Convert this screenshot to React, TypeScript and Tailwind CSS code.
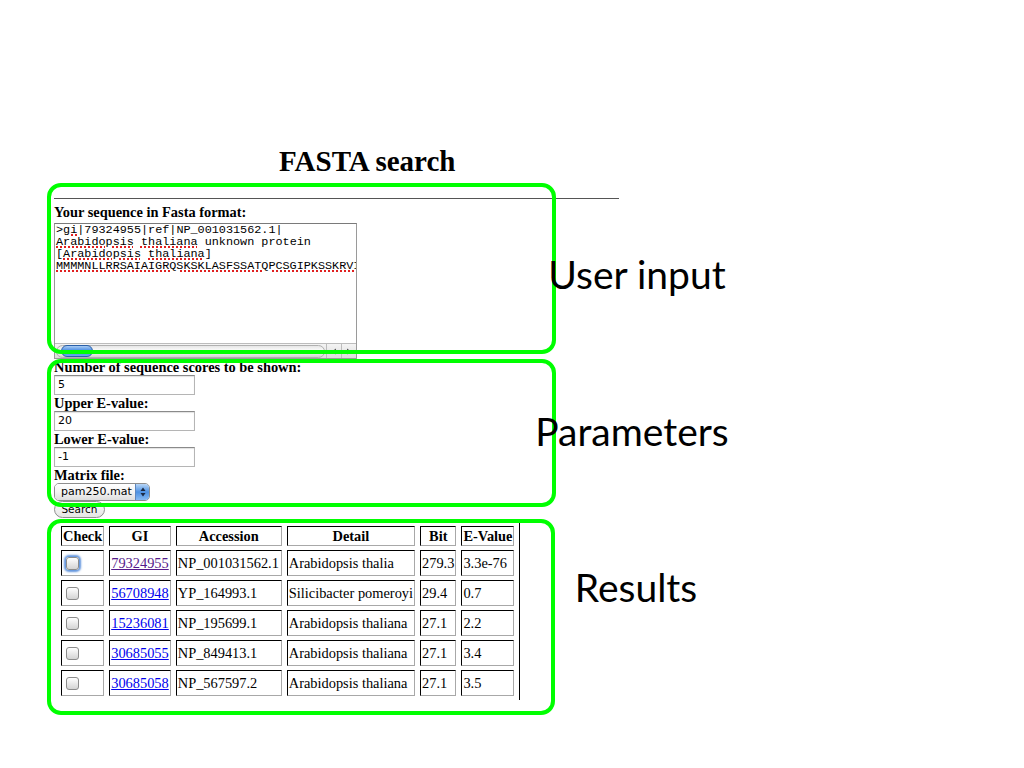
import React from "react";

const serif = "font-['Liberation_Serif','Times_New_Roman',serif]";

const rows = [
  { gi: "79324955", acc: "NP_001031562.1", detail: "Arabidopsis thalia", bit: "279.3", e: "3.3e-76", visited: true, focus: true },
  { gi: "56708948", acc: "YP_164993.1", detail: "Silicibacter pomeroyi", bit: "29.4", e: "0.7" },
  { gi: "15236081", acc: "NP_195699.1", detail: "Arabidopsis thaliana", bit: "27.1", e: "2.2" },
  { gi: "30685055", acc: "NP_849413.1", detail: "Arabidopsis thaliana", bit: "27.1", e: "3.4" },
  { gi: "30685058", acc: "NP_567597.2", detail: "Arabidopsis thaliana", bit: "27.1", e: "3.5" },
];

const cell =
  "border border-t-black border-l-black border-r-[#a8a8a8] border-b-[#a8a8a8] p-[1px] overflow-hidden whitespace-nowrap leading-[16px]";

function Spell({ children }: { children: React.ReactNode }) {
  return (
    <span className="underline decoration-dotted decoration-[#e02020] decoration-[1.5px] underline-offset-[1px]">
      {children}
    </span>
  );
}

function TextInput({ value }: { value: string }) {
  return (
    <div className="w-[141px] h-[20px] border border-[#b5b5b5] border-t-[#8a8a8a] bg-white shadow-[inset_0_1px_1px_rgba(0,0,0,0.12)] flex items-center pl-[3px] text-[11px] font-['DejaVu_Sans',sans-serif] text-black">
      {value}
    </div>
  );
}

function Label({ children }: { children: React.ReactNode }) {
  return <div className="text-[14.4px] leading-[16px] font-bold whitespace-nowrap">{children}</div>;
}

function Checkbox({ focus }: { focus?: boolean }) {
  return (
    <div
      className={
        "ml-[3px] w-[13px] h-[13px] rounded-[3px] border border-[#8c8c8c] bg-gradient-to-b from-white to-[#d4d4d4] " +
        (focus ? "shadow-[0_0_2px_2px_rgba(70,130,215,0.85)]" : "")
      }
    />
  );
}

export default function App() {
  return (
    <div className="relative w-[1024px] h-[768px] bg-white overflow-hidden text-black">
      <div className={`${serif} pt-[145px] pl-[54px] w-[640px]`}>
        <h1 className="ml-[225px] text-[29px] leading-[32px] font-bold whitespace-nowrap">FASTA search</h1>
        <div className="mt-[21px] w-[565px] h-[1px] bg-[#555]" />
        <div className="mt-[5px]">
          <Label>Your sequence in Fasta format:</Label>
        </div>
        <div className="mt-[3px] w-[303px] h-[136px] border border-[#9a9a9a] border-t-[#7a7a7a] bg-white flex flex-col overflow-hidden">
          <div className="flex-1 pl-[1px] pt-[0px] font-['Liberation_Mono','Courier_New',monospace] text-[11.8px] leading-[12px] whitespace-nowrap overflow-hidden">
            <div>
              &gt;<Spell>gi</Spell>|79324955|ref|NP_001031562.1|
            </div>
            <div>
              <Spell>Arabidopsis</Spell> <Spell>thaliana</Spell> unknown protein
            </div>
            <div>
              [<Spell>Arabidopsis</Spell> <Spell>thaliana</Spell>]
            </div>
            <div>
              <Spell>MMMMNLLRRSAIAIGRQSKSKLASFSSATQPCSGIPKSSKRVI</Spell>
            </div>
          </div>
          <div className="h-[15px] flex items-center bg-gradient-to-b from-[#f4f4f4] to-[#dcdcdc] border-t border-[#bcbcbc]">
            <div className="flex-1 h-[13px] mx-[1px] rounded-full bg-gradient-to-b from-[#e6e6e6] via-white to-[#d0d0d0] border border-[#b0b0b0] flex items-center">
              <div className="ml-[4px] w-[32px] h-[12px] rounded-full bg-gradient-to-b from-[#a8cbf3] via-[#3d86e0] to-[#6aa9ef] border border-[#2a5fa8]" />
            </div>
            <div className="w-[15px] h-[15px] flex items-center justify-center border-l border-[#bcbcbc]">
              <svg width="6" height="7" viewBox="0 0 6 7">
                <path d="M5 0.5 L0.8 3.5 L5 6.5 Z" fill="#555" />
              </svg>
            </div>
            <div className="w-[15px] h-[15px] flex items-center justify-center border-l border-[#bcbcbc]">
              <svg width="6" height="7" viewBox="0 0 6 7">
                <path d="M1 0.5 L5.2 3.5 L1 6.5 Z" fill="#555" />
              </svg>
            </div>
          </div>
        </div>

        <Label>Number of sequence scores to be shown:</Label>
        <TextInput value="5" />
        <Label>Upper E-value:</Label>
        <TextInput value="20" />
        <Label>Lower E-value:</Label>
        <TextInput value="-1" />
        <Label>Matrix file:</Label>
        <div className="w-[96px] h-[18px] rounded-[5px] border border-[#8e8e8e] flex overflow-hidden font-['DejaVu_Sans',sans-serif] text-[11px]">
          <div className="flex-1 flex items-center pl-[6px] bg-gradient-to-b from-white via-[#f3f3f3] to-[#dedede]">pam250.mat</div>
          <div className="w-[14px] flex items-center justify-center bg-gradient-to-b from-[#b8d6f6] via-[#4b90e2] to-[#86baf2] border-l border-[#5d87bf]">
            <svg width="6" height="10" viewBox="0 0 6 10">
              <path d="M3 0.5 L5.5 4 L0.5 4 Z" fill="#1b2a44" />
              <path d="M3 9.5 L5.5 6 L0.5 6 Z" fill="#1b2a44" />
            </svg>
          </div>
        </div>
        <div className="w-[51px] h-[17px] rounded-full border border-[#8e8e8e] bg-gradient-to-b from-white to-[#e4e4e4] flex items-center justify-center font-['DejaVu_Sans',sans-serif] text-[10.5px] leading-none">
          Search
        </div>

        <table className="mt-[4px] ml-[2px] table-fixed border-separate border-spacing-x-[5px] border-spacing-y-[4px] border-r border-black text-[14.4px]">
          <thead>
            <tr>
              <th className={`${cell} w-[41px] h-[20px] text-center font-bold`}>Check</th>
              <th className={`${cell} w-[61px] text-center font-bold`}>GI</th>
              <th className={`${cell} w-[106px] text-center font-bold`}>Accession</th>
              <th className={`${cell} w-[128px] text-center font-bold`}>Detail</th>
              <th className={`${cell} w-[36px] text-center font-bold`}>Bit</th>
              <th className={`${cell} w-[53px] text-center font-bold`}>E-Value</th>
            </tr>
          </thead>
          <tbody>
            {rows.map((r) => (
              <tr key={r.gi}>
                <td className={`${cell} h-[26px] align-middle`}>
                  <Checkbox focus={r.focus} />
                </td>
                <td className={`${cell} align-middle`}>
                  <span className={"underline " + (r.visited ? "text-[#551a8b]" : "text-[#0000ee]")}>{r.gi}</span>
                </td>
                <td className={`${cell} align-middle`}>{r.acc}</td>
                <td className={`${cell} align-middle`}>{r.detail}</td>
                <td className={`${cell} align-middle`}>{r.bit}</td>
                <td className={`${cell} align-middle`}>{r.e}</td>
              </tr>
            ))}
          </tbody>
        </table>
      </div>

      {/* annotation boxes */}
      <div className="absolute left-[47px] top-[183px] w-[509px] h-[171px] border-4 border-[#00ff00] rounded-[14px]" />
      <div className="absolute left-[47px] top-[359px] w-[509px] h-[148px] border-4 border-[#00ff00] rounded-[14px]" />
      <div className="absolute left-[47px] top-[519px] w-[508px] h-[196px] border-4 border-[#00ff00] rounded-[14px]" />

      {/* annotation labels */}
      <div className="absolute left-[535px] top-[255px] w-[204px] text-center font-['Lato',sans-serif] text-[39px] leading-[39px] whitespace-nowrap">
        User input
      </div>
      <div className="absolute left-[530px] top-[412px] w-[204px] text-center font-['Lato',sans-serif] text-[39px] leading-[39px] whitespace-nowrap">
        Parameters
      </div>
      <div className="absolute left-[534px] top-[568px] w-[204px] text-center font-['Lato',sans-serif] text-[39px] leading-[39px] whitespace-nowrap">
        Results
      </div>
    </div>
  );
}
